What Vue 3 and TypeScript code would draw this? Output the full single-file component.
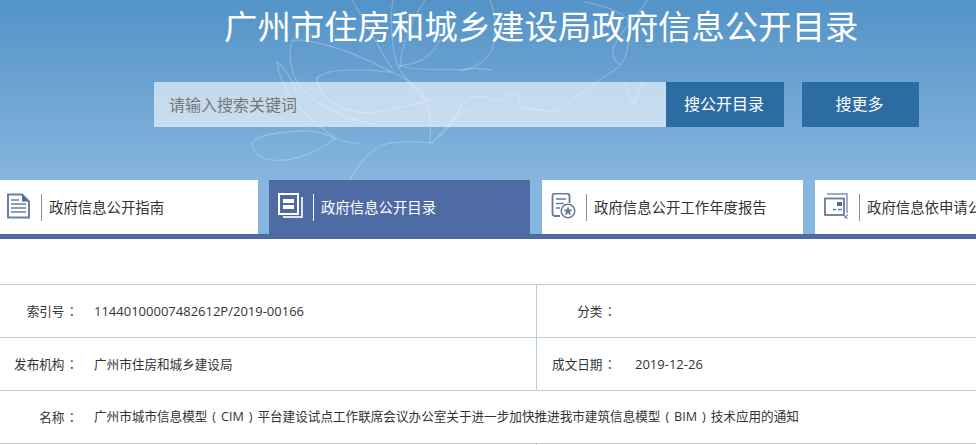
<script setup lang="ts">
interface Tab { label: string; active?: boolean }
interface Cell { label: string; value: string; numeric?: boolean }

const tabs: Tab[] = [
  { label: '政府信息公开指南' },
  { label: '政府信息公开目录', active: true },
  { label: '政府信息公开工作年度报告' },
  { label: '政府信息依申请公开' },
]

const halfRows: Cell[][] = [
  [{ label: '索引号', value: '11440100007482612P/2019-00166', numeric: true }, { label: '分类', value: '' }],
  [{ label: '发布机构', value: '广州市住房和城乡建设局' }, { label: '成文日期', value: '2019-12-26', numeric: true }],
]
const title = '广州市城市信息模型 ( CIM ) 平台建设试点工作联席会议办公室关于进一步加快推进我市建筑信息模型 ( BIM ) 技术应用的通知'
</script>

<template>
  <div class="page">
    <header class="hero">
      <svg class="flower" width="976" height="180" viewBox="0 0 976 180" fill="none" aria-hidden="true">
        <path d="M293 40C287 52 290 78 305 92C322 108 345 118 372 124" />
        <path d="M293 40C320 40 350 52 372 62C382 67 388 71 393 72" />
        <path d="M277 62C279 80 292 104 310 118C320 127 328 133 335 138" />
        <path d="M277 62C285 68 291 78 296 90" />
        <path d="M317 78C325 70 350 68 390 72C410 78 420 90 426 100" />
        <path d="M317 78C318 95 335 110 360 112C385 114 410 105 430 100" />
        <path d="M252 144C256 136 270 133 300 131C312 130 322 132 335 138C345 142 352 144 360 143" />
        <path d="M252 144C254 156 266 162 285 160C305 158 322 148 335 139" />
        <path d="M350 180C358 165 368 153 380 146C395 140 415 142 432 143C440 135 452 118 470 108" />
        <path d="M393 0C389 20 393 52 397 64C405 82 422 95 427 104C431 118 431 130 430 142" />
        <path d="M352 0C362 16 378 48 392 68" />
        <path d="M425 0C410 22 402 45 400 66C420 72 445 68 463 70C475 66 485 70 492 70" />
        <path d="M490 0C496 15 497 32 492 50C485 62 475 68 463 70" />
        <path d="M440 137C452 125 458 112 462 104C470 94 485 95 493 100C500 104 510 92 515 93C522 99 518 107 523 107C535 110 548 112 557 110C580 95 600 78 620 67" />
        <path d="M613 48C612 56 615 62 620 65C628 58 630 38 628 20C620 10 600 5 585 2" />
        <path d="M625 83C627 92 630 98 634 104C638 95 640 88 642 82" />
        <path d="M647 0C640 14 625 24 613 48" />
        <path d="M440 40C432 55 425 62 400 66" />
      </svg>
      <h1 class="site-title">广州市住房和城乡建设局政府信息公开目录</h1>
      <form class="search" @submit.prevent>
        <input class="search-input" type="text" placeholder="请输入搜索关键词" />
        <button class="search-btn primary" type="button">搜公开目录</button>
        <button class="search-btn more" type="button">搜更多</button>
      </form>
      <nav class="tabs">
        <a v-for="(tab, i) in tabs" :key="tab.label" class="tab" :class="{ active: tab.active }">
          <svg v-if="i === 0" class="icon" width="26" height="28" viewBox="0 0 26 28" fill="none">
            <path d="M2 1.5H16L23 8.5V24.5H2Z" stroke="#6b7ea6" stroke-width="2" />
            <path d="M16 1L23.5 8.5H16Z" fill="#4e6ca3" />
            <path d="M5 7H13M5 11H20M5 15H20M5 19H20" stroke="#6b7ea6" stroke-width="1.6" />
          </svg>
          <svg v-else-if="i === 1" class="icon" width="26" height="28" viewBox="0 0 26 28" fill="none">
            <rect x="1" y="1" width="19" height="20" stroke="#fff" stroke-width="2" />
            <path d="M24 4V24H5" stroke="#dfe4ee" stroke-width="2" />
            <rect x="5" y="6" width="11" height="4" fill="#fff" />
            <rect x="5" y="12" width="11" height="4" fill="#fff" />
          </svg>
          <svg v-else-if="i === 2" class="icon" width="26" height="28" viewBox="0 0 26 28" fill="none">
            <path d="M9 23H4A2.5 2.5 0 0 1 1.5 20.500V3A2.500 2.500 0 0 1 4 .5H16A2.500 2.500 0 0 1 18.500 3V10" stroke="#66799f" stroke-width="1.800" />
            <path d="M5 6H15M5 10.500H13M5 15H9" stroke="#66799f" stroke-width="1.600" />
            <circle cx="17" cy="18" r="6.800" stroke="#66799f" stroke-width="1.500" fill="#fff" />
            <path d="M17 13.500L18.300 16.600L21.500 16.800L19 19L19.800 22.200L17 20.500L14.200 22.200L15 19L12.500 16.800L15.700 16.600Z" fill="#66799f" />
          </svg>
          <svg v-else class="icon" width="26" height="28" viewBox="0 0 26 28" fill="none">
            <path d="M3 1H23V20" stroke="#8090b0" stroke-width="1.400" />
            <rect x="1" y="5.500" width="19" height="16.500" fill="#fff" stroke="#66799f" stroke-width="1.800" />
            <rect x="13" y="9" width="5" height="4" fill="#4e6ca3" />
            <path d="M9 16.500H12M14 16.500H18" stroke="#66799f" stroke-width="1.500" />
            <path d="M21 22.500V25H24M24 21L21.500 24.500" stroke="#8090b0" stroke-width="1.200" />
          </svg>
          <span class="divider"></span>
          <span class="tab-label">{{ tab.label }}</span>
        </a>
      </nav>
    </header>
    <div class="strip"></div>

    <section class="meta">
      <div v-for="row in halfRows" :key="row[0].label" class="row split">
        <div v-for="cell in row" :key="cell.label" class="cell">
          <span class="label">{{ cell.label }}<span class="colon">：</span></span>
          <span class="value" :class="{ numeric: cell.numeric }">{{ cell.value }}</span>
        </div>
      </div>
      <div class="row">
        <div class="cell">
          <span class="label">名称<span class="colon">：</span></span>
          <span class="value long">{{ title }}</span>
        </div>
      </div>
      <div class="row split">
        <div class="cell"></div>
        <div class="cell"></div>
      </div>
    </section>
  </div>
</template>

<style>
html, body { margin: 0; background: #fff; overflow: hidden; }
</style>

<style scoped>
.page {
  width: 976px;
  height: 445px;
  overflow: hidden;
  font-family: "Noto Sans CJK SC", "Noto Sans", sans-serif;
  color: #333;
  background: #fff;
}
.hero {
  position: relative;
  height: 234px;
  background: linear-gradient(180deg, #5393c7 0%, #86b5de 77%, #86b5de 100%);
  box-sizing: border-box;
}
.flower {
  position: absolute;
  left: 0;
  top: 0;
}
.flower path {
  stroke: rgba(255, 255, 255, 0.22);
  stroke-width: 1.3;
  stroke-linecap: round;
}
.site-title {
  position: relative;
  margin: 0;
  height: 54px;
  padding-left: 224px;
  font-size: 33.4px;
  line-height: 49px;
  font-weight: 400;
  color: #fff;
  white-space: nowrap;
}
.search {
  position: relative;
  display: flex;
  margin: 28px 0 0 154px;
  height: 45px;
}
.search-input {
  width: 512px;
  height: 45px;
  box-sizing: border-box;
  padding: 0 15px 2px;
  border: 0;
  outline: 0;
  background: rgba(255, 255, 255, 0.6);
  font: inherit;
  font-size: 16px;
  color: #777;
}
.search-input::placeholder {
  color: #777;
  opacity: 1;
}
.search-btn {
  height: 45px;
  border: 0;
  padding: 0 2px 3px 0;
  background: #2d6ca3;
  color: #fff;
  font: inherit;
  font-size: 16px;
}
.primary { width: 118px; }
.more { width: 117px; margin-left: 18px; }
.tabs {
  position: relative;
  display: flex;
  margin: 53px 0 0 -3px;
  height: 54px;
}
.tab {
  flex: 0 0 261px;
  height: 54px;
  box-sizing: border-box;
  display: flex;
  align-items: center;
  padding-left: 9px;
  background: #fff;
  color: #333;
  font-size: 14.4px;
  white-space: nowrap;
}
.tab + .tab { margin-left: 12px; }
.tab:nth-child(2) { margin-left: 11px; }
.tab.active {
  height: 59px;
  padding-bottom: 5px;
  background: #4e6ca3;
  color: #fff;
}
.tab-label {
  line-height: 20px;
}
.icon { flex: none; width: 26px; height: 28px; }
.divider {
  flex: none;
  width: 1px;
  height: 27px;
  margin: 0 7px 0 9px;
  background: #7f92b4;
}
.tab.active .divider { background: #fff; }
.strip { height: 5px; background: #4e6ca3; }
.meta { margin-top: 45px; }
.row {
  display: flex;
  height: 53px;
  box-sizing: border-box;
  border-top: 1px solid #b8ccdb;
}
.split .cell:first-child {
  flex: 0 0 536px;
  border-right: 1px solid #b8ccdb;
}
.split .cell:first-child + .cell .label { width: 79px; }
.split .cell:first-child + .cell .value { margin-left: 19px; }
.cell {
  display: flex;
  align-items: center;
  font-size: 12.6px;
  line-height: 18px;
  min-width: 0;
}
.label {
  flex: none;
  width: 78px;
  text-align: right;
}
.colon {
  margin-left: 1px;
  font-family: "Noto Sans CJK TC", sans-serif;
}
.value {
  margin-left: 16px;
  white-space: nowrap;
}
.numeric {
  font-family: "Open Sans", sans-serif;
  font-size: 13px;
}
.long {
  font-family: "Open Sans", "Noto Sans CJK SC", sans-serif;
  word-spacing: 1.7px;
}
</style>
